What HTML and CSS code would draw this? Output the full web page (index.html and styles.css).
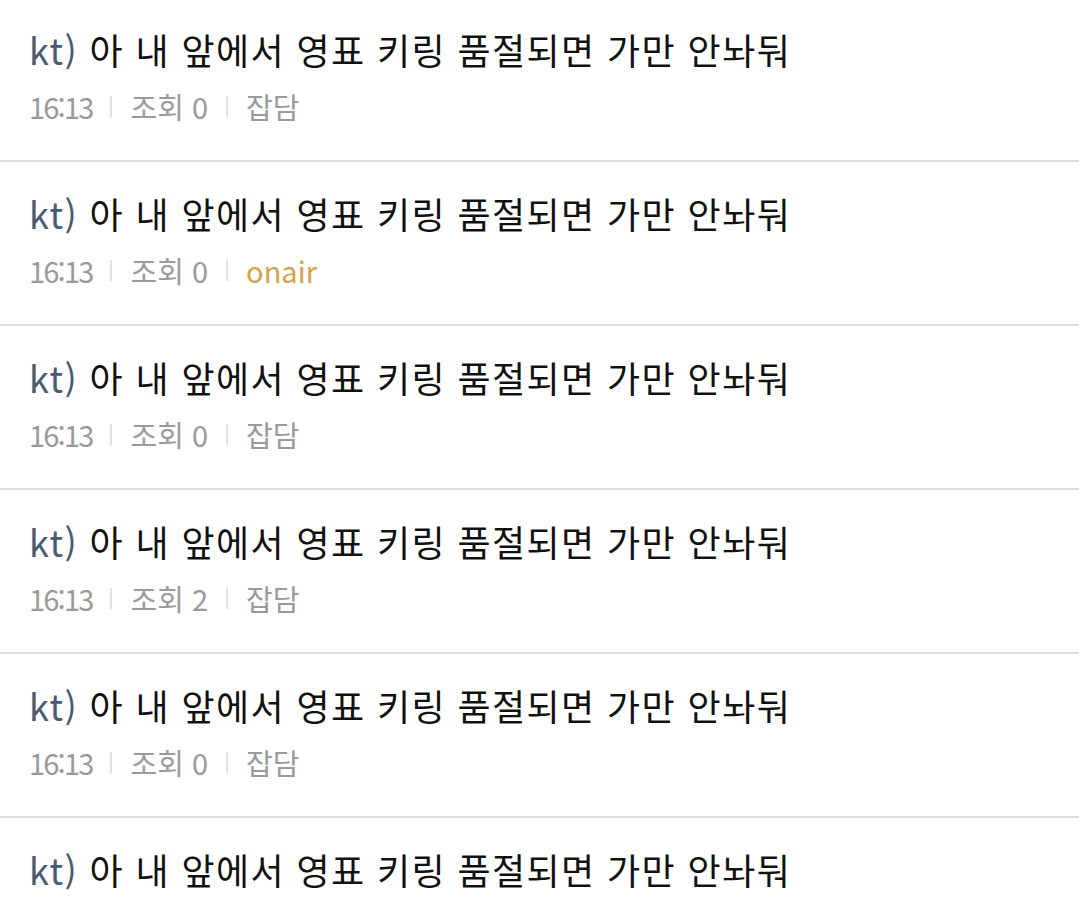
FILE: index.html
```html
<!DOCTYPE html>
<html lang="ko">
  <head>
    <meta charset="UTF-8" />
    <meta name="viewport" content="width=device-width" />
    <title>게시판</title>
    <link rel="stylesheet" href="styles.css">
  </head>
  <body>
    <ul class="post-list">
      <li class="post">
        <a class="post-title" href="#"><span class="tag">kt)</span> 아 내 앞에서 영표 키링 품절되면 가만 안놔둬</a>
        <div class="post-meta">
          <span class="time">16:13</span><span class="sep"></span><span>조회 0</span><span class="sep"></span><span>잡담</span>
        </div>
      </li>
      <li class="post">
        <a class="post-title" href="#"><span class="tag">kt)</span> 아 내 앞에서 영표 키링 품절되면 가만 안놔둬</a>
        <div class="post-meta">
          <span class="time">16:13</span><span class="sep"></span><span>조회 0</span><span class="sep"></span><span class="cat-onair">onair</span>
        </div>
      </li>
      <li class="post">
        <a class="post-title" href="#"><span class="tag">kt)</span> 아 내 앞에서 영표 키링 품절되면 가만 안놔둬</a>
        <div class="post-meta">
          <span class="time">16:13</span><span class="sep"></span><span>조회 0</span><span class="sep"></span><span>잡담</span>
        </div>
      </li>
      <li class="post">
        <a class="post-title" href="#"><span class="tag">kt)</span> 아 내 앞에서 영표 키링 품절되면 가만 안놔둬</a>
        <div class="post-meta">
          <span class="time">16:13</span><span class="sep"></span><span>조회 2</span><span class="sep"></span><span>잡담</span>
        </div>
      </li>
      <li class="post">
        <a class="post-title" href="#"><span class="tag">kt)</span> 아 내 앞에서 영표 키링 품절되면 가만 안놔둬</a>
        <div class="post-meta">
          <span class="time">16:13</span><span class="sep"></span><span>조회 0</span><span class="sep"></span><span>잡담</span>
        </div>
      </li>
      <li class="post">
        <a class="post-title" href="#"><span class="tag">kt)</span> 아 내 앞에서 영표 키링 품절되면 가만 안놔둬</a>
        <div class="post-meta">
          <span class="time">16:13</span><span class="sep"></span><span>조회 0</span><span class="sep"></span><span>잡담</span>
        </div>
      </li>
    </ul>
  </body>
</html>
```

FILE: styles.css
```css
body {
  margin: 0;
  background: #fff;
  font-family: "Noto Sans CJK KR", "Noto Sans", sans-serif;
}
.post-list {
  list-style: none;
  margin: -2px 0 0;
  padding: 0;
}
.post {
  box-sizing: border-box;
  height: 164px;
  padding: 26px 29px 0;
  border-bottom: 2px solid #dcdcdc;
}
.post-title {
  display: block;
  color: #111;
  text-decoration: none;
  font-size: 36px;
  line-height: 50px;
  letter-spacing: 1.4px;
  white-space: nowrap;
}
.tag {
  color: #4a5a70;
}
.post-meta {
  display: flex;
  align-items: center;
  margin-top: 12px;
  color: #9a9a9a;
  font-size: 29px;
  line-height: 40px;
  white-space: nowrap;
}
.time {
  letter-spacing: -1.8px;
}
.sep {
  width: 2px;
  height: 21px;
  margin: 0 18px;
  background: #e2e2e2;
}
.cat-onair {
  color: #d4a24c;
}
```
